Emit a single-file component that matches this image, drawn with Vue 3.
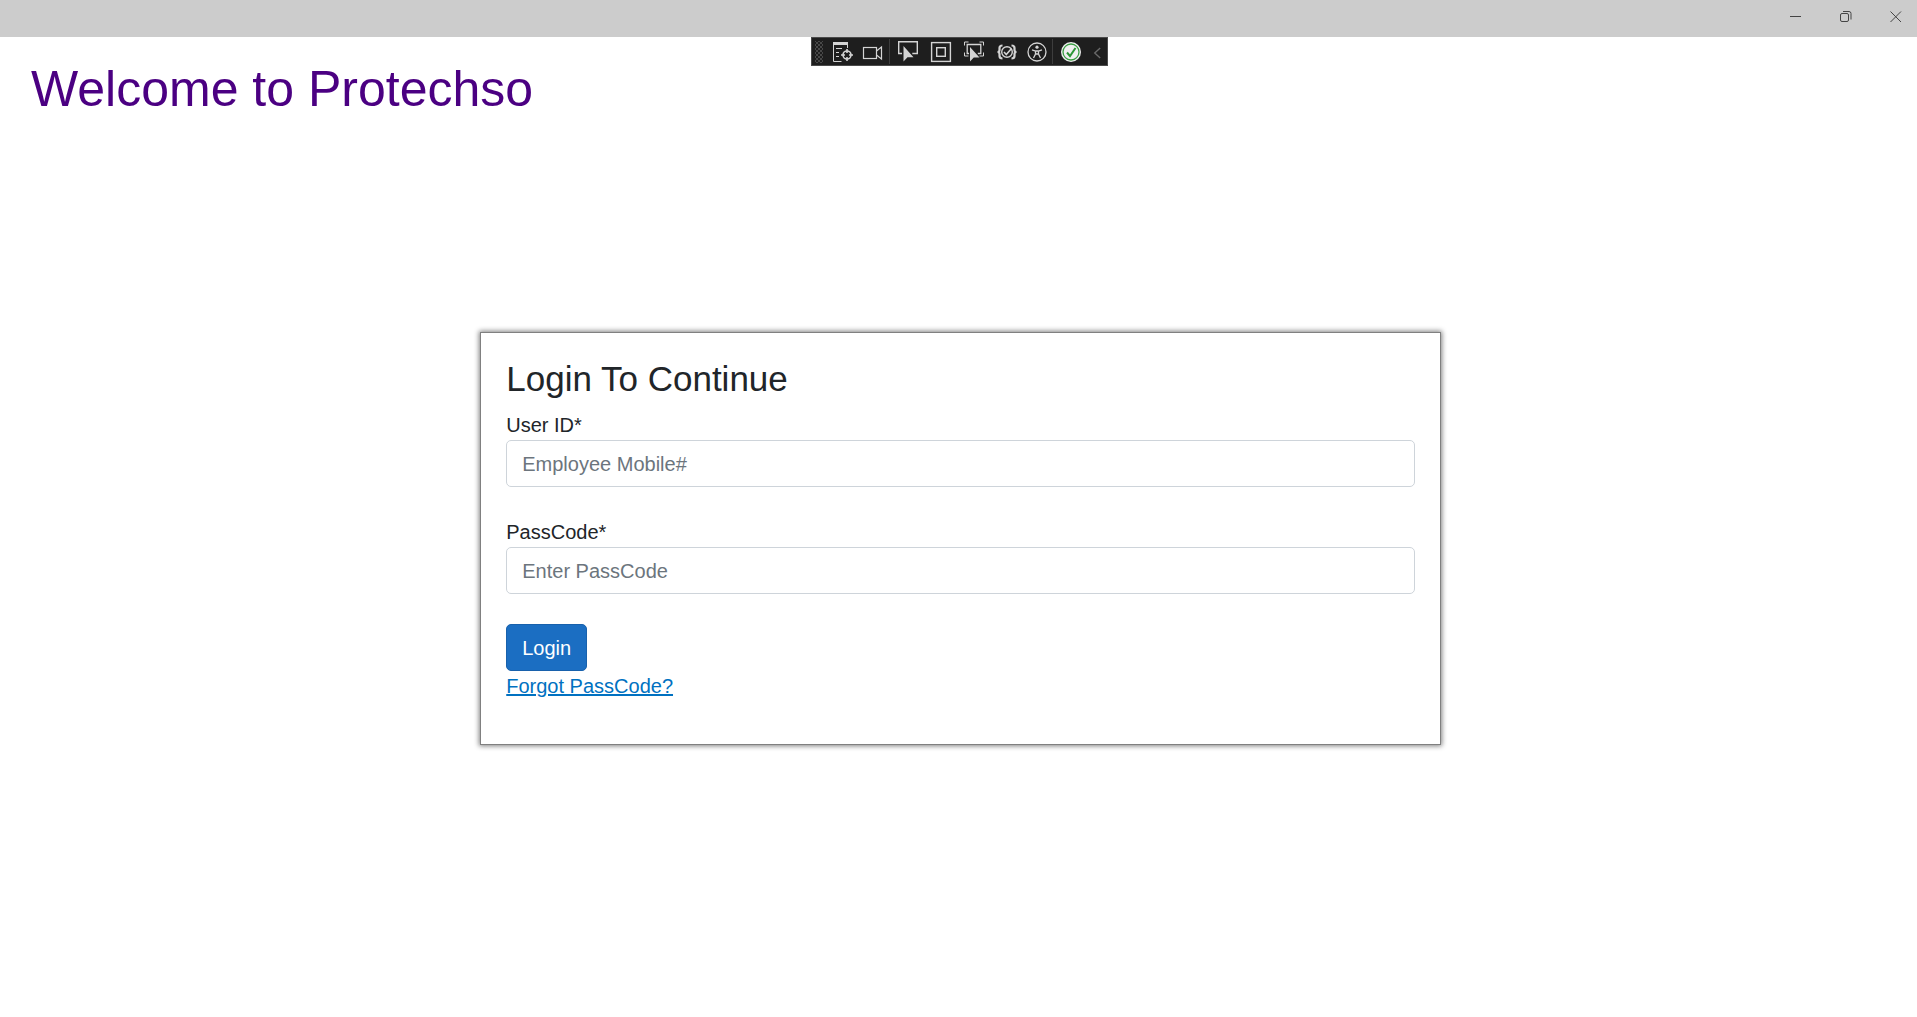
<script setup>
import { ref } from 'vue'

const userId = ref('')
const passCode = ref('')
</script>

<template>
  <div class="window">
    <header class="titlebar">
      <button type="button" aria-label="Minimize">
        <svg viewBox="0 0 22 22"><path d="M5 11.5h11" /></svg>
      </button>
      <button type="button" aria-label="Restore">
        <svg viewBox="0 0 22 22">
          <rect x="5.5" y="8.5" width="8" height="8" rx="1.5" />
          <path d="M8 6.5h6q2 0 2 2v6" />
        </svg>
      </button>
      <button type="button" aria-label="Close">
        <svg viewBox="0 0 22 22"><path d="M5.5 6.5l10.5 10.5M16 6.5L5.5 17" /></svg>
      </button>
    </header>

    <div class="debugbar" role="toolbar" aria-label="Debug tools">
      <span class="grip"></span>
      <button type="button" aria-label="Live visual tree">
        <svg viewBox="0 0 22 22">
          <path d="M1 1h15v3h-15z" fill="#d4d4d4" stroke="none" />
          <path d="M1.500 3v17.500h8M15.500 4v3M4 7.500h6M4 11.500h3M4 15.500h3" />
          <circle cx="15" cy="14" r="4" stroke-width="1.600" />
          <path d="M15 8v4M15 16v4M9 14h4M17 14h4" stroke-width="1.600" />
        </svg>
      </button>
      <button type="button" aria-label="Record">
        <svg viewBox="0 0 22 22">
          <rect x="1.500" y="6.500" width="13" height="11" stroke-width="1.200" />
          <path d="M14.500 10l5-4v12l-5-4" stroke-width="1.200" />
        </svg>
      </button>
      <span class="divider"></span>
      <button type="button" class="wide" aria-label="Select element">
        <svg viewBox="0 0 22 22">
          <path d="M5 12.500h-3.300v-11.800h18.600v11.800h-5" stroke-width="1.400" />
          <path d="M6.500 5v15.500l4-4.200h6z" fill="#d4d4d4" stroke="none" />
        </svg>
      </button>
      <button type="button" class="wide" aria-label="Display layout adorners">
        <svg viewBox="0 0 22 22">
          <rect x="1.600" y="1.600" width="18.800" height="18.800" stroke-width="1.400" />
          <rect x="6.700" y="6.700" width="8.600" height="8.600" stroke-width="1.400" />
        </svg>
      </button>
      <button type="button" class="wide" aria-label="Track focused element">
        <svg viewBox="0 0 22 22">
          <path d="M1.500 4.500v-3.500h4M16.500 1h4v3.500M1.500 11.500v3.500h4M16.500 15h4v-3.500" />
          <path d="M6 12.500h-1.800v-9h13.600v9h-3" stroke-width="1.300" />
          <path d="M7 6v14.500l3.800-4h5.700z" fill="#d4d4d4" stroke="none" />
        </svg>
      </button>
      <button type="button" class="wide" aria-label="Hot reload status">
        <svg viewBox="0 0 22 22">
          <path d="M6.500 4.500q-3 0-3 2.500v2q0 2-2 2 2 0 2 2v2q0 2.500 3 2.500M15.500 4.500q3 0 3 2.500v2q0 2 2 2-2 0-2 2v2q0 2.500-3 2.500" stroke-width="2.200" />
          <circle cx="11" cy="11" r="5.300" stroke-width="1.400" />
          <path d="M8 11l2.300 2.500 5.200-6" stroke-width="1.600" />
        </svg>
      </button>
      <button type="button" class="narrow" aria-label="Scan for accessibility issues">
        <svg viewBox="0 0 22 22">
          <circle cx="11" cy="11" r="9" stroke-width="1.300" />
          <circle cx="11" cy="6.200" r="1.600" fill="#d4d4d4" stroke="none" />
          <path d="M6 8.800l3.500 1.200h3l3.500-1.200M9.500 10v3l-2 4M12.500 10v3l2 4M9.500 13h3" stroke-width="1.300" />
        </svg>
      </button>
      <span class="divider"></span>
      <button type="button" class="wide" aria-label="Hot reload available">
        <svg viewBox="0 0 22 22">
          <circle cx="11" cy="11" r="10" fill="#f0f0f0" stroke="none" />
          <circle cx="11" cy="11" r="8" stroke="#3a9e43" stroke-width="1.300" />
          <path d="M7 11.500l3 3.500 5.500-8" stroke="#2c9636" stroke-width="2" />
        </svg>
      </button>
      <button type="button" class="collapse" aria-label="Collapse toolbar">
        <svg viewBox="0 0 22 22"><path d="M14.500 6.500l-6 5.500 6 5.500" stroke="#6a6a6a" stroke-width="1.500" /></svg>
      </button>
    </div>

    <main>
      <h1>Welcome to Protechso</h1>
      <form class="card" @submit.prevent>
        <h2>Login To Continue</h2>
        <div class="field">
          <label for="user-id">User ID*</label>
          <input id="user-id" v-model="userId" type="text" placeholder="Employee Mobile#" />
        </div>
        <div class="field">
          <label for="pass-code">PassCode*</label>
          <input id="pass-code" v-model="passCode" type="password" placeholder="Enter PassCode" />
        </div>
        <button type="submit" class="login">Login</button>
        <a href="#">Forgot PassCode?</a>
      </form>
    </main>
  </div>
</template>

<style>
body {
  margin: 0;
  background: #fff;
}
</style>

<style scoped>
.window {
  position: relative;
  font: 20px/30px "Liberation Sans", Arial, sans-serif;
  color: #212529;
}

button {
  font: inherit;
  cursor: pointer;
}

.titlebar {
  display: flex;
  justify-content: flex-end;
  gap: 28px;
  height: 37px;
  padding-right: 10px;
  box-sizing: border-box;
  background: #ccc;
}

.titlebar button {
  width: 22px;
  height: 32px;
  padding: 0;
  border: 0;
  background: none;
}

svg {
  display: block;
  width: 22px;
  height: 22px;
  fill: none;
  stroke: #d4d4d4;
}

.titlebar svg {
  stroke: #444;
}

.debugbar {
  position: absolute;
  top: 37px;
  left: 2px;
  right: 0;
  margin: 0 auto;
  display: flex;
  align-items: center;
  box-sizing: border-box;
  width: 297px;
  height: 29px;
  border: 1px solid #4a4a4a;
  background: #1e1e1e;
}

.debugbar button {
  display: flex;
  flex: none;
  justify-content: center;
  width: 30px;
  padding: 0;
  border: 0;
  background: none;
}

.debugbar .wide {
  width: 33px;
}

.debugbar .narrow {
  width: 28px;
}

.debugbar .collapse {
  width: 20px;
}

.grip {
  width: 8px;
  height: 22px;
  margin: 0 5px 0 3px;
  background:
    radial-gradient(circle, #484848 1px, transparent 1px) 0 0 / 4px 4px,
    radial-gradient(circle, #484848 1px, transparent 1px) 2px 2px / 4px 4px;
}

.divider {
  width: 1px;
  height: 25px;
  margin: 0 1px;
  background: #3d3d3d;
}

main {
  padding: 22px 0 30px;
}

h1,
h2 {
  margin: 0;
  font-weight: 400;
}

h1 {
  margin-left: 31px;
  font-size: 50px;
  line-height: 60px;
  color: #4b0082;
}

.card {
  box-sizing: border-box;
  width: calc(50% + 2px);
  margin: 213px 0 0 calc(25% + 1px);
  padding: 25px 25px 43px;
  border: 1px solid #808080;
  box-shadow: 0 0 5px 1px #808080;
}

h2 {
  margin-bottom: 10px;
  font-size: 35px;
  line-height: 42px;
}

.field {
  display: flex;
  flex-direction: column;
  margin-bottom: 30px;
}

input {
  box-sizing: border-box;
  width: 100%;
  height: 47px;
  padding: 2px 15px 0;
  border: 1px solid #ced4da;
  border-radius: 5px;
  background: #fff;
  font: inherit;
  color: #495057;
}

input::placeholder {
  color: #6c757d;
  opacity: 1;
}

.login {
  display: block;
  height: 47px;
  padding: 0 15px;
  border: 1px solid #1861ac;
  border-radius: 5px;
  background: #1b6ec2;
  color: #fff;
}

a {
  color: #0071c1;
  text-decoration: underline;
}
</style>
